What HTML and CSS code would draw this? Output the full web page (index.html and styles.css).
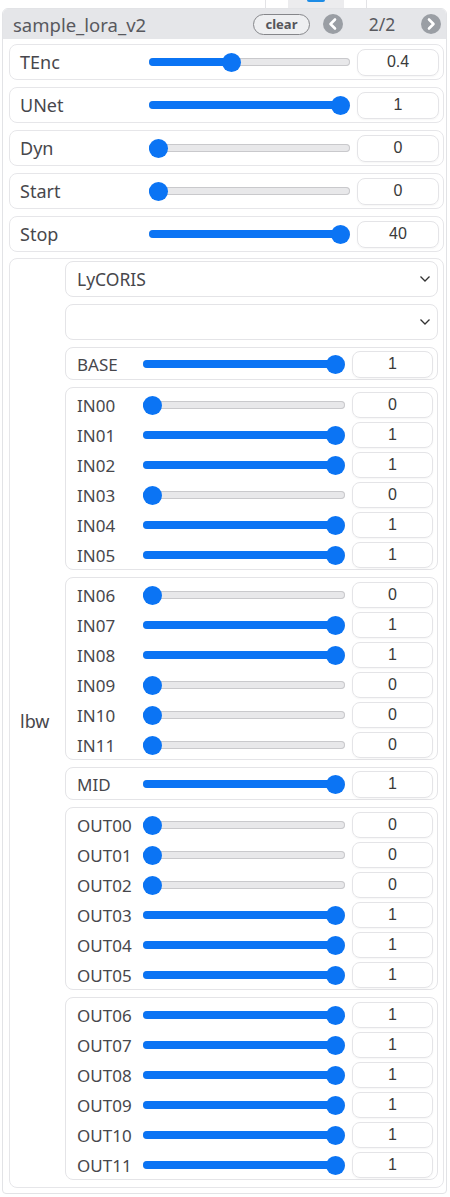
FILE: index.html
```html
<!DOCTYPE html>
<html>
<head>
<meta charset="utf-8">
<link rel="stylesheet" href="styles.css">
</head>
<body>
<div class="topstrip">
  <span class="tab-line first"></span>
  <span class="tab"><span class="tab-blue"></span></span>
  <span class="tab-line"></span>
</div>
<div class="panel">
  <div class="head">
    <span class="title">sample_lora_v2</span>
    <span class="clear">clear</span>
    <span class="nav"><svg viewBox="0 0 20 20" width="20" height="20"><circle cx="10" cy="10" r="10" fill="#9a9ea4"/><path d="M12 5.5 L7.5 10 L12 14.5" fill="none" stroke="#fff" stroke-width="2.6" stroke-linecap="round" stroke-linejoin="round"/></svg></span>
    <span class="page">2/2</span>
    <span class="nav"><svg viewBox="0 0 20 20" width="20" height="20"><circle cx="10" cy="10" r="10" fill="#9a9ea4"/><path d="M8 5.5 L12.5 10 L8 14.5" fill="none" stroke="#fff" stroke-width="2.6" stroke-linecap="round" stroke-linejoin="round"/></svg></span>
  </div>
  <div class="body">
    <div class="row"><span class="label">TEnc</span><div class="slider" style="--v:0.4"><div class="fill"></div><div class="thumb"></div></div><div class="num">0.4</div></div>
    <div class="row"><span class="label">UNet</span><div class="slider" style="--v:1"><div class="fill"></div><div class="thumb"></div></div><div class="num">1</div></div>
    <div class="row"><span class="label">Dyn</span><div class="slider" style="--v:0"><div class="fill"></div><div class="thumb"></div></div><div class="num">0</div></div>
    <div class="row"><span class="label">Start</span><div class="slider" style="--v:0"><div class="fill"></div><div class="thumb"></div></div><div class="num">0</div></div>
    <div class="row"><span class="label">Stop</span><div class="slider" style="--v:1"><div class="fill"></div><div class="thumb"></div></div><div class="num">40</div></div>

    <div class="lbw">
      <div class="lbw-label">lbw</div>
      <div class="lbw-col">
        <div class="select"><span>LyCORIS</span><svg class="chev" viewBox="0 0 12 8" width="12" height="8"><path d="M1.5 1.5 L6 6 L10.5 1.5" fill="none" stroke="#333" stroke-width="1.3"/></svg></div>
        <div class="select"><span></span><svg class="chev" viewBox="0 0 12 8" width="12" height="8"><path d="M1.5 1.5 L6 6 L10.5 1.5" fill="none" stroke="#333" stroke-width="1.3"/></svg></div>

        <div class="box single">
          <div class="irow"><span class="ilabel">BASE</span><div class="slider" style="--v:1"><div class="fill"></div><div class="thumb"></div></div><div class="num">1</div></div>
        </div>

        <div class="box group">
          <div class="irow"><span class="ilabel">IN00</span><div class="slider" style="--v:0"><div class="fill"></div><div class="thumb"></div></div><div class="num">0</div></div>
          <div class="irow"><span class="ilabel">IN01</span><div class="slider" style="--v:1"><div class="fill"></div><div class="thumb"></div></div><div class="num">1</div></div>
          <div class="irow"><span class="ilabel">IN02</span><div class="slider" style="--v:1"><div class="fill"></div><div class="thumb"></div></div><div class="num">1</div></div>
          <div class="irow"><span class="ilabel">IN03</span><div class="slider" style="--v:0"><div class="fill"></div><div class="thumb"></div></div><div class="num">0</div></div>
          <div class="irow"><span class="ilabel">IN04</span><div class="slider" style="--v:1"><div class="fill"></div><div class="thumb"></div></div><div class="num">1</div></div>
          <div class="irow"><span class="ilabel">IN05</span><div class="slider" style="--v:1"><div class="fill"></div><div class="thumb"></div></div><div class="num">1</div></div>
        </div>

        <div class="box group">
          <div class="irow"><span class="ilabel">IN06</span><div class="slider" style="--v:0"><div class="fill"></div><div class="thumb"></div></div><div class="num">0</div></div>
          <div class="irow"><span class="ilabel">IN07</span><div class="slider" style="--v:1"><div class="fill"></div><div class="thumb"></div></div><div class="num">1</div></div>
          <div class="irow"><span class="ilabel">IN08</span><div class="slider" style="--v:1"><div class="fill"></div><div class="thumb"></div></div><div class="num">1</div></div>
          <div class="irow"><span class="ilabel">IN09</span><div class="slider" style="--v:0"><div class="fill"></div><div class="thumb"></div></div><div class="num">0</div></div>
          <div class="irow"><span class="ilabel">IN10</span><div class="slider" style="--v:0"><div class="fill"></div><div class="thumb"></div></div><div class="num">0</div></div>
          <div class="irow"><span class="ilabel">IN11</span><div class="slider" style="--v:0"><div class="fill"></div><div class="thumb"></div></div><div class="num">0</div></div>
        </div>

        <div class="box single">
          <div class="irow"><span class="ilabel">MID</span><div class="slider" style="--v:1"><div class="fill"></div><div class="thumb"></div></div><div class="num">1</div></div>
        </div>

        <div class="box group">
          <div class="irow"><span class="ilabel">OUT00</span><div class="slider" style="--v:0"><div class="fill"></div><div class="thumb"></div></div><div class="num">0</div></div>
          <div class="irow"><span class="ilabel">OUT01</span><div class="slider" style="--v:0"><div class="fill"></div><div class="thumb"></div></div><div class="num">0</div></div>
          <div class="irow"><span class="ilabel">OUT02</span><div class="slider" style="--v:0"><div class="fill"></div><div class="thumb"></div></div><div class="num">0</div></div>
          <div class="irow"><span class="ilabel">OUT03</span><div class="slider" style="--v:1"><div class="fill"></div><div class="thumb"></div></div><div class="num">1</div></div>
          <div class="irow"><span class="ilabel">OUT04</span><div class="slider" style="--v:1"><div class="fill"></div><div class="thumb"></div></div><div class="num">1</div></div>
          <div class="irow"><span class="ilabel">OUT05</span><div class="slider" style="--v:1"><div class="fill"></div><div class="thumb"></div></div><div class="num">1</div></div>
        </div>

        <div class="box group">
          <div class="irow"><span class="ilabel">OUT06</span><div class="slider" style="--v:1"><div class="fill"></div><div class="thumb"></div></div><div class="num">1</div></div>
          <div class="irow"><span class="ilabel">OUT07</span><div class="slider" style="--v:1"><div class="fill"></div><div class="thumb"></div></div><div class="num">1</div></div>
          <div class="irow"><span class="ilabel">OUT08</span><div class="slider" style="--v:1"><div class="fill"></div><div class="thumb"></div></div><div class="num">1</div></div>
          <div class="irow"><span class="ilabel">OUT09</span><div class="slider" style="--v:1"><div class="fill"></div><div class="thumb"></div></div><div class="num">1</div></div>
          <div class="irow"><span class="ilabel">OUT10</span><div class="slider" style="--v:1"><div class="fill"></div><div class="thumb"></div></div><div class="num">1</div></div>
          <div class="irow"><span class="ilabel">OUT11</span><div class="slider" style="--v:1"><div class="fill"></div><div class="thumb"></div></div><div class="num">1</div></div>
        </div>
      </div>
    </div>
  </div>
</div>
</body>
</html>
```

FILE: styles.css
```css
* { box-sizing: border-box; }
html, body { margin: 0; padding: 0; background: #ffffff; }
body {
  font-family: "Noto Sans", "Open Sans", sans-serif;
  color: #47474c;
  width: 450px;
  height: 1197px;
  overflow: hidden;
}

.topstrip {
  height: 8px;
  display: flex;
  align-items: stretch;
}
.tab-line { width: 1px; background: #e3e3e6; }
.tab-line.first { margin-left: 265px; }
.tab {
  margin-left: 22px;
  width: 56px;
  background: #ececee;
  margin-right: 22px;
  display: flex;
  justify-content: center;
}
.tab-blue { width: 18px; height: 2px; background: #1d8ce6; border-radius: 0 0 2px 2px; }

.panel {
  margin: 0 3px 0 2px;
  border: 1px solid #e2e3e6;
  border-radius: 6px 6px 4px 4px;
  background: #fff;
  overflow: hidden;
  height: 1186px;
}

.head {
  height: 30px;
  background: #e5e6e9;
  display: flex;
  align-items: center;
  padding: 0 5px 0 10px;
}
.title {
  flex: 1;
  font-size: 18.5px;
  color: #58595e;
}
.clear {
  width: 57px;
  height: 21px;
  border: 1px solid #85868a;
  border-radius: 11px;
  background: #eeeff1;
  font-weight: 700;
  font-size: 13px;
  color: #55565b;
  display: flex;
  align-items: center;
  justify-content: center;
  margin-right: 13px;
  padding-bottom: 1px;
}
.nav { width: 20px; height: 20px; display: flex; }
.page {
  width: 78px;
  text-align: center;
  font-size: 17.5px;
  color: #58595e;
}

.body {
  padding: 5px 2px 0 6px;
  display: flex;
  flex-direction: column;
  gap: 7px;
}

.row {
  height: 36px;
  border: 1px solid #e6e6e9;
  border-radius: 8px;
  display: grid;
  grid-template-columns: 122px 1fr 82px;
  column-gap: 7px;
  align-items: center;
  padding: 0 4px 0 10px;
}
.label { font-size: 18px; color: #47474c; }

.slider {
  position: relative;
  height: 8px;
  border-radius: 4px;
  background: #e8e8ea;
  box-shadow: inset 0 0 0 1px #c9c9cc;
}
.fill {
  position: absolute;
  left: 0; top: 0; bottom: 0;
  width: calc(9.5px + (100% - 19px) * var(--v));
  background: #0b74f4;
  border-radius: 4px;
}
.thumb {
  position: absolute;
  top: 50%;
  left: calc((100% - 19px) * var(--v));
  width: 19px;
  height: 19px;
  margin-top: -9.5px;
  border-radius: 50%;
  background: #0b74f4;
}

.num {
  height: 27px;
  border: 1px solid #e4e4e7;
  border-radius: 8px;
  box-shadow: 0 1px 2px rgba(0,0,0,0.04);
  display: flex;
  align-items: center;
  justify-content: center;
  font-family: "Liberation Sans", Arial, sans-serif;
  font-size: 16px;
  color: #3a3a3a;
}

.lbw {
  margin-top: -1px;
  border: 1px solid #e6e6e9;
  border-radius: 8px;
  display: grid;
  grid-template-columns: 55px 1fr;
  padding: 2px 5px 7px 0;
}
.lbw-label {
  align-self: center;
  padding-left: 10px;
  font-size: 18px;
  color: #47474c;
}
.lbw-col {
  display: flex;
  flex-direction: column;
  gap: 7px;
}

.select {
  height: 36px;
  border: 1px solid #e4e4e7;
  border-radius: 8px;
  display: flex;
  align-items: center;
  justify-content: space-between;
  padding: 0 6px 0 11px;
  font-size: 17.5px;
  color: #47474c;
}
.chev { display: block; }

.box {
  border: 1px solid #e4e4e7;
  border-radius: 8px;
}
.box.single {
  height: 33px;
  display: flex;
  align-items: center;
  padding: 0 4px 0 11px;
}
.box.single .irow { flex: 1; }
.box.group {
  height: 183px;
  padding: 4px 4px 1px 11px;
  display: flex;
  flex-direction: column;
  gap: 4px;
}
.irow {
  height: 26px;
  display: grid;
  grid-template-columns: 59px 1fr 81px;
  column-gap: 7px;
  align-items: center;
}
.ilabel { font-size: 17px; color: #47474c; }
.irow .num { height: 26px; }
.box.single .num { height: 27px; }
```
